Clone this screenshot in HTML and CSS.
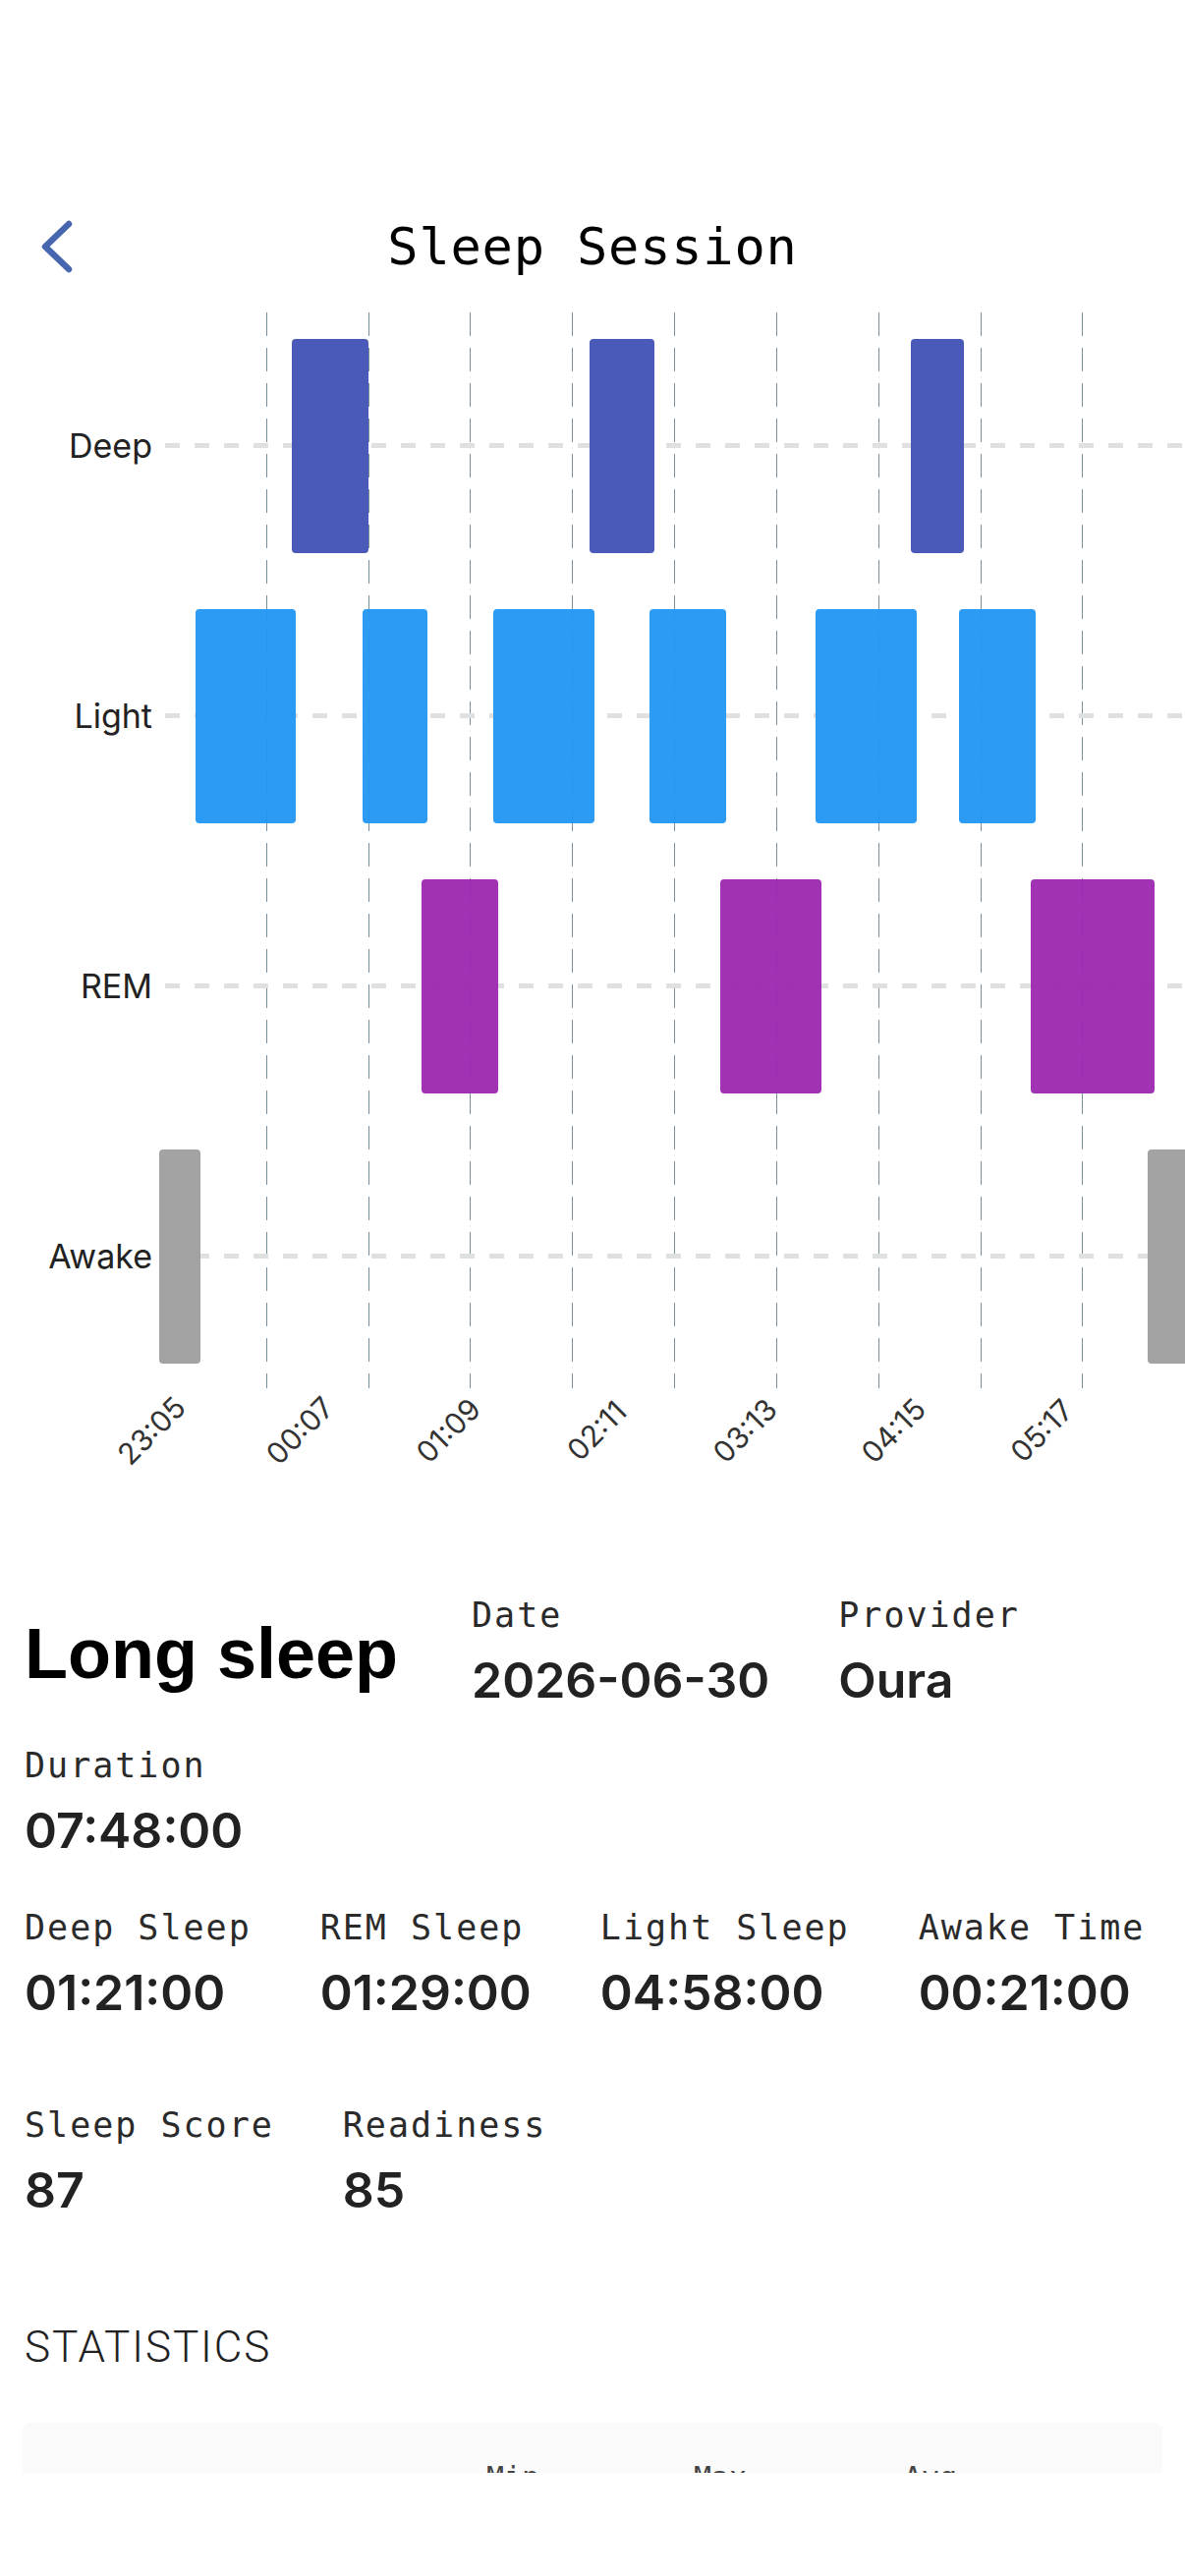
FILE: index.html
```html
<!DOCTYPE html>
<html lang="en">
<head>
    <meta charset="UTF-8">
    <meta name="viewport" content="width=device-width, initial-scale=1.0">
    <title>Sleep Session</title>
    <link rel="stylesheet" href="styles.css">
</head>
<body>
    <div class="screen">
        <header class="topbar">
            <div class="topbar-side">
                <button class="back-button" aria-label="Back">
                    <svg width="40" height="60" viewBox="0 0 40 60">
                        <polyline points="30,7 6,30 30,53" fill="none" stroke="#4766b0" stroke-width="6.5" stroke-linecap="round" stroke-linejoin="round"/>
                    </svg>
                </button>
            </div>
            <h1 class="title">Sleep Session</h1>
            <div class="topbar-side"></div>
        </header>

        <section class="chart">
            <div class="plot">
                <div class="grid">
                    <div class="vline" style="left:104px"></div>
                    <div class="vline" style="left:208px"></div>
                    <div class="vline" style="left:311px"></div>
                    <div class="vline" style="left:415px"></div>
                    <div class="vline" style="left:519px"></div>
                    <div class="vline" style="left:623px"></div>
                    <div class="vline" style="left:727px"></div>
                    <div class="vline" style="left:831px"></div>
                    <div class="vline" style="left:934px"></div>
                </div>

                <div class="stage-row">
                    <span class="stage-label">Deep</span>
                    <div class="track">
                        <div class="bar deep" style="left:130px;width:78px"></div>
                        <div class="bar deep" style="left:433px;width:66px"></div>
                        <div class="bar deep" style="left:760px;width:54px"></div>
                    </div>
                </div>
                <div class="stage-row">
                    <span class="stage-label">Light</span>
                    <div class="track">
                        <div class="bar light" style="left:32px;width:102px"></div>
                        <div class="bar light" style="left:202px;width:66px"></div>
                        <div class="bar light" style="left:335px;width:103px"></div>
                        <div class="bar light" style="left:494px;width:78px"></div>
                        <div class="bar light" style="left:663px;width:103px"></div>
                        <div class="bar light" style="left:809px;width:78px"></div>
                    </div>
                </div>
                <div class="stage-row">
                    <span class="stage-label">REM</span>
                    <div class="track">
                        <div class="bar rem" style="left:262px;width:78px"></div>
                        <div class="bar rem" style="left:566px;width:103px"></div>
                        <div class="bar rem" style="left:882px;width:126px"></div>
                    </div>
                </div>
                <div class="stage-row">
                    <span class="stage-label">Awake</span>
                    <div class="track">
                        <div class="bar awake" style="left:-5px;width:42px"></div>
                        <div class="bar awake" style="left:1001px;width:60px"></div>
                    </div>
                </div>
            </div>

            <div class="axis">
                <span class="tick" style="left:154px">23:05</span>
                <span class="tick" style="left:305px">00:07</span>
                <span class="tick" style="left:456px">01:09</span>
                <span class="tick" style="left:607px">02:11</span>
                <span class="tick" style="left:758px">03:13</span>
                <span class="tick" style="left:909px">04:15</span>
                <span class="tick" style="left:1060px">05:17</span>
            </div>
        </section>

        <section class="summary">
            <div class="field-row first-row">
                <h2 class="session-type">Long sleep</h2>
                <div class="field">
                    <div class="field-label">Date</div>
                    <div class="field-value">2026-06-30</div>
                </div>
                <div class="field">
                    <div class="field-label">Provider</div>
                    <div class="field-value">Oura</div>
                </div>
            </div>

            <div class="field-row duration-row">
                <div class="field">
                    <div class="field-label">Duration</div>
                    <div class="field-value">07:48:00</div>
                </div>
            </div>

            <div class="field-row stages-row">
                <div class="field">
                    <div class="field-label">Deep Sleep</div>
                    <div class="field-value">01:21:00</div>
                </div>
                <div class="field">
                    <div class="field-label">REM Sleep</div>
                    <div class="field-value">01:29:00</div>
                </div>
                <div class="field">
                    <div class="field-label">Light Sleep</div>
                    <div class="field-value">04:58:00</div>
                </div>
                <div class="field">
                    <div class="field-label">Awake Time</div>
                    <div class="field-value">00:21:00</div>
                </div>
            </div>

            <div class="field-row scores-row">
                <div class="field">
                    <div class="field-label">Sleep Score</div>
                    <div class="field-value">87</div>
                </div>
                <div class="field">
                    <div class="field-label">Readiness</div>
                    <div class="field-value">85</div>
                </div>
            </div>

            <h3 class="section-title">STATISTICS</h3>

            <div class="stats-card">
                <div class="stats-head">
                    <span></span>
                    <span>Min</span>
                    <span>Max</span>
                    <span>Avg</span>
                </div>
            </div>
        </section>
    </div>
    <div class="home-area"></div>
</body>
</html>
```

FILE: styles.css
```css
body {
    margin: 0;
    padding: 0;
    background-color: white;
    font-family: "Inter", "Roboto", sans-serif;
    color: #222;
}

.screen {
    height: 2517px;
    overflow: hidden;
    padding-top: 200px;
    box-sizing: border-box;
}

.home-area {
    height: 105px;
    background-color: white;
}

/* header */
.topbar {
    height: 102px;
    display: grid;
    grid-template-columns: 1fr auto 1fr;
    align-items: center;
}

.back-button {
    background: none;
    border: none;
    padding: 0 0 0 40px;
    display: flex;
    cursor: pointer;
}

.title {
    margin: 0;
    font-family: "DejaVu Sans Mono", monospace;
    font-weight: normal;
    font-size: 52px;
    letter-spacing: 0.8px;
    line-height: 1;
    color: #000;
}

/* chart */
.chart {
    margin-top: 14px;
}

.plot {
    position: relative;
}

.grid {
    position: absolute;
    left: 167px;
    right: 0;
    top: 2px;
    bottom: 3px;
}

.vline {
    position: absolute;
    top: 0;
    bottom: 0;
    width: 1px;
    background: repeating-linear-gradient(to bottom, #78909c 0 24px, transparent 24px 36px);
}

.stage-row {
    height: 275px;
    display: flex;
    align-items: center;
}

.stage-label {
    width: 167px;
    flex-shrink: 0;
    box-sizing: border-box;
    padding-right: 12px;
    text-align: right;
    font-size: 34px;
    color: #222;
}

.track {
    flex: 1;
    height: 100%;
    position: relative;
}

.track::before {
    content: "";
    position: absolute;
    left: 1px;
    right: 0;
    top: 135px;
    height: 5px;
    background: repeating-linear-gradient(to right, #e0e0e0 0 15px, transparent 15px 30px);
}

.bar {
    position: absolute;
    top: 29px;
    height: 218px;
    border-radius: 4px;
    opacity: 0.95;
}

.bar.deep {
    background-color: #3f51b5;
}

.bar.light {
    background-color: #2196f3;
}

.bar.rem {
    background-color: #9c27b0;
}

.bar.awake {
    background-color: #9e9e9e;
}

.axis {
    position: relative;
    height: 180px;
}

.tick {
    position: absolute;
    top: 40px;
    transform: translate(-50%, -50%) rotate(-45deg);
    white-space: nowrap;
    font-size: 30px;
    color: #333;
}

/* summary */
.summary {
    padding: 0 23px 0 25px;
}

.field-row {
    display: flex;
    gap: 70px;
}

.first-row {
    margin-top: 26px;
    align-items: center;
}

.duration-row {
    margin-top: 32px;
}

.stages-row {
    margin-top: 44px;
}

.scores-row {
    margin-top: 80px;
}

.session-type {
    margin: 0 5px 0 0;
    font-family: "Liberation Sans", Arial, sans-serif;
    font-weight: bold;
    font-size: 72px;
    line-height: 1;
    color: #000;
}

.field-label {
    font-family: "DejaVu Sans Mono", monospace;
    font-size: 35px;
    letter-spacing: 2px;
    line-height: 44px;
    color: #2a2a2a;
}

.field-value {
    margin-top: 11px;
    font-weight: 600;
    font-size: 50px;
    line-height: 66px;
    color: #222;
}

.section-title {
    margin: 102px 0 0 0;
    font-family: "Roboto", sans-serif;
    font-weight: 300;
    font-size: 44px;
    letter-spacing: 1.9px;
    line-height: 50px;
    color: #222;
}

.stats-card {
    margin: 52px 0 0 -2px;
    height: 220px;
    background-color: #fafafa;
    border-radius: 8px;
    padding-top: 36px;
    box-sizing: border-box;
}

.stats-head {
    display: grid;
    grid-template-columns: 472px 211px 214px 1fr;
    font-family: "DejaVu Sans Mono", monospace;
    font-size: 30px;
    line-height: 40px;
    color: #444;
}
```
